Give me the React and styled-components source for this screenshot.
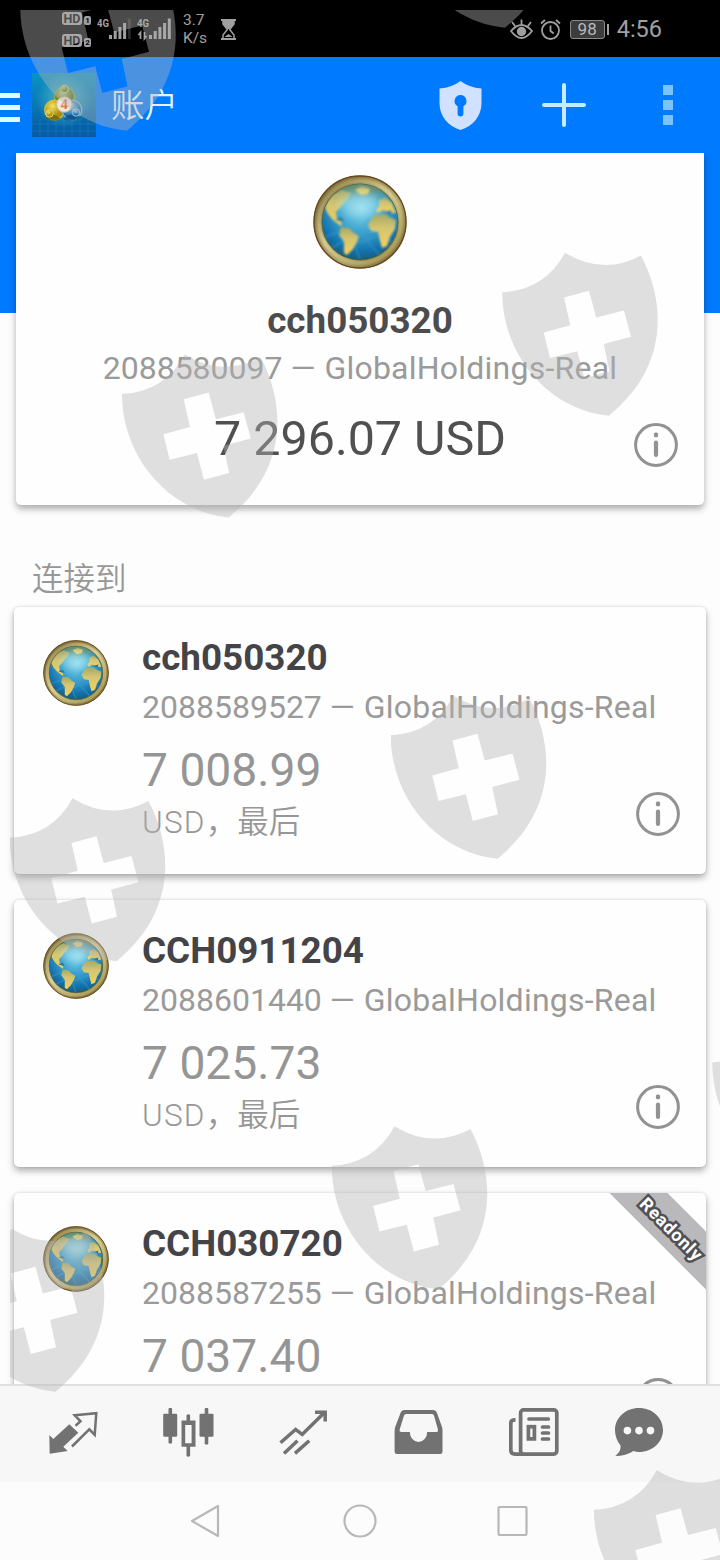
import React from "react";
import styled, { createGlobalStyle } from "styled-components";

const accounts = [
    { name: "cch050320", number: "2088589527", balance: "7 008.99" },
    { name: "CCH0911204", number: "2088601440", balance: "7 025.73" },
    {
        name: "CCH030720",
        number: "2088587255",
        balance: "7 037.40",
        readonly: true,
    },
];

// top left corner of every shield mark
const marks = [
    [20, -33],
    [398, -136],
    [502, 252],
    [121.7, 353.7],
    [390.5, 695],
    [9.5, 797.5],
    [712, 1022],
    [331.5, 1125.5],
    [-51.5, 1228],
    [593.7, 1469.5],
];

const GlobalStyle = createGlobalStyle`
    body {
        margin: 0;
        background: #fdfdfd;
        font-family: Roboto, "Noto Sans CJK SC", sans-serif;
    }
    p, h1, h2 {
        margin: 0;
        font-weight: 400;
    }
    svg {
        display: block;
        flex: none;
    }
`;

const Screen = styled.div`
    position: relative;
    display: flex;
    flex-direction: column;
    width: 720px;
    height: 1560px;
    overflow: hidden;
`;

const StatusBar = styled.div`
    display: flex;
    align-items: center;
    flex: none;
    box-sizing: border-box;
    height: 57px;
    padding: 1px 58px 0 62px;
    background: #000;
    color: #a0a0a0;
`;

const HdList = styled.div`
    display: flex;
    flex-direction: column;
    gap: 9px;
    margin-right: 6px;
`;

const HdRow = styled.div`
    display: flex;
    align-items: flex-end;
    gap: 2px;
    height: 13px;
    b {
        width: 20px;
        height: 13px;
        border-radius: 3px;
        background: #a0a0a0;
        color: #000;
        text-align: center;
        font-size: 12.5px;
        line-height: 13.5px;
    }
    i {
        width: 7px;
        height: 9px;
        border-radius: 2px;
        background: #a0a0a0;
        color: #000;
        text-align: center;
        font-style: normal;
        font-weight: 700;
        font-size: 8px;
        line-height: 9px;
    }
`;

const Speed = styled.p`
    width: 37px;
    margin: 0 0 0 12px;
    font-size: 15.5px;
    line-height: 18px;
    white-space: nowrap;
`;

const StatusRight = styled.div`
    display: flex;
    align-items: center;
    margin-left: auto;
`;

const Battery = styled.div`
    display: flex;
    align-items: center;
    gap: 2px;
    margin: 0 8px 0 9px;
    span {
        box-sizing: border-box;
        width: 35px;
        height: 19px;
        border: 1px solid #8a8a8a;
        border-radius: 3px;
        background: #3c3c3c;
        color: #b8b8b8;
        text-align: center;
        font-size: 17px;
        line-height: 17px;
    }
    &::after {
        content: "";
        width: 2px;
        height: 11px;
        background: #a0a0a0;
    }
`;

const Clock = styled.span`
    font-size: 23.5px;
    line-height: 28px;
`;

const AppBar = styled.header`
    display: flex;
    align-items: center;
    flex: none;
    box-sizing: border-box;
    height: 96px;
    padding-right: 47px;
    background: #007aff;
`;

const MenuButton = styled.div`
    width: 20px;
    height: 29px;
    margin: 4px 12px 0 0;
    box-sizing: border-box;
    border-top: 5px solid #e2f8ff;
    border-bottom: 5px solid #e2f8ff;
    &::before {
        content: "";
        display: block;
        height: 5px;
        margin-top: 7px;
        background: #e2f8ff;
    }
`;

const Title = styled.h1`
    flex: 1;
    padding: 2px 0 0 15px;
    color: #e4f3ff;
    font-size: 33.5px;
    font-weight: 350;
    line-height: 48px;
`;

const MoreButton = styled.div`
    display: grid;
    gap: 5px;
    margin-left: 77px;
    i {
        width: 10px;
        height: 10px;
        background: #7cc3fb;
    }
`;

const Content = styled.main`
    flex: 1;
    min-height: 0;
    overflow: hidden;
    background: linear-gradient(#007aff 160px, #fdfdfd 160px);
`;

const CurrentCard = styled.section`
    position: relative;
    display: flex;
    flex-direction: column;
    align-items: center;
    box-sizing: border-box;
    height: 352px;
    margin: 0 16px;
    padding-top: 22px;
    border-radius: 0 0 5px 5px;
    background: #fefefe;
    box-shadow: 0 4px 7px rgba(0, 0, 0, 0.32);
`;

const Name = styled.h2`
    margin-top: ${(props) => (props.$current ? 28 : 0)}px;
    color: ${(props) => (props.$current ? "#4c4c4c" : "#444448")};
    font-size: 36.8px;
    font-weight: 700;
    line-height: 48px;
`;

const Server = styled.p`
    color: #9a9a9a;
    font-size: 32px;
    line-height: 46px;
    white-space: nowrap;
    span {
        margin-left: 1px;
        letter-spacing: 0.23px;
    }
`;

const Balance = styled.p`
    color: ${(props) => (props.$current ? "#505050" : "#959595")};
    font-size: ${(props) => (props.$current ? 48.4 : 46.2)}px;
    line-height: 56px;
    margin-top: ${(props) => (props.$current ? 20 : 12)}px;
`;

const Currency = styled.p`
    margin-top: 1px;
    color: #979797;
    font-size: 31.5px;
    font-weight: 350;
    line-height: 48px;
    span {
        letter-spacing: 1.2px;
    }
`;

const InfoButton = styled.div`
    position: absolute;
    right: 26px;
    bottom: 38px;
`;

const ListTitle = styled.p`
    height: 48px;
    margin: 51px 32px 3px;
    color: #979797;
    font-size: 31.5px;
    font-weight: 350;
    line-height: 48px;
`;

const List = styled.div`
    display: flex;
    flex-direction: column;
    gap: 26px;
    margin: 0 14px;
`;

const Card = styled.section`
    position: relative;
    display: flex;
    gap: 33px;
    box-sizing: border-box;
    height: 267px;
    padding: 33px 29px 0;
    border-radius: 5px;
    background: #fefefe;
    box-shadow: 0 4px 7px rgba(0, 0, 0, 0.3), 0 0 3px rgba(0, 0, 0, 0.14);
`;

const CardBody = styled.div`
    margin-top: -6px;
    ${Server} {
        margin-top: 2px;
    }
`;

const RibbonArea = styled.div`
    position: absolute;
    top: 0;
    right: 0;
    width: 110px;
    height: 110px;
    overflow: hidden;
    border-radius: 0 5px 0 0;
`;

const Ribbon = styled.span`
    position: absolute;
    top: 13px;
    left: -14px;
    box-sizing: border-box;
    width: 180px;
    height: 41px;
    padding-left: 3px;
    background: #b9b9bb;
    color: #fff;
    text-align: center;
    font-size: 17.8px;
    font-weight: 700;
    line-height: 45px;
    letter-spacing: 0.8px;
    transform: rotate(45deg);
    -webkit-text-stroke: 5px #505055;
    paint-order: stroke fill;
`;

const TabBar = styled.nav`
    display: flex;
    gap: 65px;
    flex: none;
    box-sizing: border-box;
    height: 98px;
    padding: 21px 0 0 49px;
    border-top: 2px solid #e0e0e0;
    background: #f7f7f7;
    svg:last-child {
        margin-left: -10px;
    }
`;

const SystemNav = styled.div`
    display: flex;
    align-items: center;
    justify-content: center;
    gap: 120px;
    flex: none;
    height: 78px;
    background: #fcfcfc;
`;

const MarkLayer = styled.svg`
    position: absolute;
    top: 0;
    left: 0;
    pointer-events: none;
`;

const AlarmIcon = styled.svg`
    margin-left: 7px;
`;

const PlusIcon = styled.svg`
    margin-left: 60px;
`;

const Globe = ({ size, id }) => (
    <svg width={size} height={size} viewBox="0 0 94 94">
        <defs>
            <linearGradient id={`rim${id}`} x1="0" y1="0" x2="1" y2="1">
                <stop offset="0" stopColor="#665526" />
                <stop offset="0.3" stopColor="#94844a" />
                <stop offset="0.6" stopColor="#aea265" />
                <stop offset="1" stopColor="#6c5722" />
            </linearGradient>
            <linearGradient id={`ring${id}`} x1="0" y1="0" x2="0.8" y2="1">
                <stop offset="0" stopColor="#8a7a44" />
                <stop offset="0.5" stopColor="#d8cf98" />
                <stop offset="1" stopColor="#a89a55" />
            </linearGradient>
            <radialGradient id={`sea${id}`} cx="0.52" cy="0.32" r="0.7">
                <stop offset="0" stopColor="#86d6ee" />
                <stop offset="0.4" stopColor="#43a9d2" />
                <stop offset="0.8" stopColor="#1272ae" />
                <stop offset="1" stopColor="#1b5a70" />
            </radialGradient>
            <linearGradient id={`land${id}`} x1="0" y1="0" x2="0" y2="1">
                <stop offset="0" stopColor="#a5a765" />
                <stop offset="0.4" stopColor="#d3c572" />
                <stop offset="1" stopColor="#f6d05a" />
            </linearGradient>
            <filter id={`soft${id}`}>
                <feGaussianBlur stdDeviation="1" />
            </filter>
            <filter id={`glow${id}`} x="-50%" y="-50%" width="200%" height="200%">
                <feGaussianBlur stdDeviation="5" />
            </filter>
            <clipPath id={`ball${id}`}>
                <circle cx="47" cy="47" r="37.8" />
            </clipPath>
        </defs>
        <circle cx="47" cy="47" r="46.5" fill={`url(#rim${id})`} />
        <circle
            cx="47"
            cy="47"
            r="41"
            fill="none"
            stroke={`url(#ring${id})`}
            strokeWidth="4.5"
            filter={`url(#soft${id})`}
        />
        <circle cx="47" cy="47" r="38.5" fill="#5d6437" />
        <g clipPath={`url(#ball${id})`}>
            <circle cx="47" cy="47" r="38" fill={`url(#sea${id})`} />
            <path
                d="M12 62L30 55L45 68L66 60L84 70M18 73L47 58L70 84M56 44L40 66L47 84"
                fill="none"
                stroke="#3fa3d5"
                strokeWidth="2"
                opacity="0.4"
                filter={`url(#soft${id})`}
            />
            <ellipse cx="47" cy="12" rx="32" ry="8" fill="#77803f" opacity="0.7" filter={`url(#glow${id})`} />
            <g filter={`url(#soft${id})`}>
                <g fill={`url(#land${id})`}>
                    <path d="M12 33Q14 24 20 19L29 15L38 18L35 24L30 29L27 33L23 37L24 44L29 48L28 51L20 45L15 39Z" />
                    <path d="M28 52L36 53L41 58L46 61L44 67L40 74L34 80L31 78L31 67L26 60Z" />
                    <path d="M55 50L58 44L62 40L72 39L78 43L83 45L82 54L77 62L74 71L69 73L67 66L65 57L58 56Z" />
                    <path d="M63 35L66 31L66 25L72 22L79 28L83 38L76 38L70 35L65 38Z" />
                    <path d="M42 15L49 11L57 14L55 19L48 20Z" />
                </g>
                <path d="M70 37L79 35L78 39ZM22 45L31 47L28 42Z" fill="#287a9c" />
            </g>
            <ellipse cx="46" cy="29" rx="20" ry="12" fill="#bdeef2" opacity="0.45" filter={`url(#glow${id})`} />
        </g>
        <circle cx="47" cy="47" r="46" fill="none" stroke="#684a22" strokeWidth="1.4" />
    </svg>
);

const InfoIcon = () => (
    <InfoButton>
        <svg width="44" height="44" viewBox="0 0 44 44">
            <circle cx="22" cy="22" r="20.4" fill="none" stroke="#929292" strokeWidth="3" />
            <path d="M22 19.5V32" stroke="#929292" strokeWidth="4.2" strokeLinecap="round" />
            <rect x="19.9" y="9.5" width="4.2" height="4.8" rx="1.5" fill="#929292" />
        </svg>
    </InfoButton>
);

const AppIcon = () => (
    <svg width="64" height="64" viewBox="0 0 64 64">
        <defs>
            <linearGradient id="appBg" x1="0" y1="0" x2="0" y2="1">
                <stop offset="0" stopColor="#0a93c4" />
                <stop offset="0.5" stopColor="#0a78b6" />
                <stop offset="0.8" stopColor="#0563a8" />
                <stop offset="1" stopColor="#065aa4" />
            </linearGradient>
            <radialGradient id="appGlow">
                <stop offset="0" stopColor="#5fc6cc" />
                <stop offset="1" stopColor="#5fc6cc" stopOpacity="0" />
            </radialGradient>
            <radialGradient id="appGreen" cx="0.4" cy="0.3">
                <stop offset="0" stopColor="#b9ca78" />
                <stop offset="1" stopColor="#587a2c" />
            </radialGradient>
            <radialGradient id="appGold" cx="0.4" cy="0.3">
                <stop offset="0" stopColor="#f6e25a" />
                <stop offset="1" stopColor="#a98d10" />
            </radialGradient>
            <radialGradient id="appBlue" cx="0.4" cy="0.3">
                <stop offset="0" stopColor="#9ad3ee" />
                <stop offset="1" stopColor="#176fae" />
            </radialGradient>
        </defs>
        <rect width="64" height="64" fill="url(#appBg)" />
        <circle cx="32" cy="27" r="28" fill="url(#appGlow)" opacity="0.8" />
        <path
            d="M0 51H64M0 58H64M8 46V64M16 46V64M24 46V64M32 46V64M40 46V64M48 46V64M56 46V64"
            stroke="#2b94cf"
            strokeWidth="0.6"
            opacity="0.5"
        />
        <g strokeWidth="1.3">
            <circle cx="32.5" cy="24" r="10" fill="url(#appGreen)" stroke="#8ea457" />
            <circle cx="32.5" cy="16" r="3.6" fill="url(#appGreen)" stroke="#b9c97f" />
            <circle cx="22.5" cy="37" r="9.8" fill="url(#appGold)" stroke="#d6bf3d" />
            <circle cx="40" cy="37" r="9.8" fill="url(#appBlue)" stroke="#76b5d8" />
        </g>
        <path d="M13 45Q20 38 29 46Q21 50 13 45Z" fill="#6f6410" opacity="0.8" />
        <path d="M31 46Q39 38 49 44Q41 50 31 46Z" fill="#124f85" opacity="0.8" />
        <circle cx="17.5" cy="40.5" r="3.7" fill="url(#appGold)" stroke="#f3e486" strokeWidth="0.8" />
        <circle cx="44" cy="39.5" r="3.7" fill="url(#appBlue)" stroke="#b8ddef" strokeWidth="0.8" />
        <circle cx="32.3" cy="31.5" r="7.8" fill="#efe5d8" stroke="#c9b98b" />
        <text
            x="32.3"
            y="36.3"
            fill="#dc7348"
            fontFamily="Liberation Serif, serif"
            fontSize="14"
            fontWeight="700"
            textAnchor="middle"
        >
            4
        </text>
    </svg>
);

const Signal = ({ faded, arrows }) => (
    <svg width="34" height="24" viewBox="0 0 34 24">
        <text x="0" y="10" fill="#a0a0a0" fontFamily="Roboto, sans-serif" fontSize="11.5" fontWeight="700" textLength="12" lengthAdjust="spacingAndGlyphs">
            4G
        </text>
        <g fill="#a0a0a0">
            <rect x="12" y="18" width="3" height="4" />
            <rect x="16.7" y="14" width="3" height="8" />
            <rect x="21.4" y="10" width="3" height="12" />
            <rect x="26.1" y="6" width="3" height="16" />
            <rect x="30.8" y="1.5" width="3" height="20.5" opacity={faded ? 0.25 : 1} />
        </g>
        {arrows && (
            <path
                d="M3.5 22V15.5L1.5 18M7.5 15V21.5L9.5 19"
                fill="none"
                stroke="#a0a0a0"
                strokeWidth="1.8"
            />
        )}
    </svg>
);

const Tabs = () => (
    <TabBar>
        <svg width="50" height="50" viewBox="0 0 50 50">
            <path d="M.3 28L4.3 32L20.3 17.3L29.3 25.7L14.3 39.7L18.7 44L.7 46.7Z" fill="#727272" />
            <path
                d="M26.5 18.8L31.5 14.3L25.7 8.3L47.3 6.2L45.7 27.8L40.3 22.3L23 39.5"
                fill="none"
                stroke="#727272"
                strokeWidth="2.5"
            />
        </svg>
        <svg width="50" height="50" viewBox="0.5 0 50 50" fill="#727272" overflow="visible">
            <rect x="-.3" y="6.8" width="14" height="23" rx="1.3" />
            <rect x="5" y="1" width="3.6" height="35.5" rx="1" />
            <rect x="36" y="6.8" width="14" height="23" rx="1.3" />
            <rect x="41.2" y="1" width="3.6" height="36.5" rx="1" />
            <path d="M18 13.6H23V8Q24.8 6.4 26.6 8V13.6H32V39.8H26.6V49Q24.8 50.5 23 49V39.8H18ZM21.7 18V36.3H28.1V18Z" fillRule="evenodd" />
        </svg>
        <svg width="50" height="50" viewBox="0 0 50 50" fill="none" stroke="#727272" strokeWidth="3.5">
            <path d="M1.5 35.8L16.6 22.4L23.2 27.4L46 5M36 5.2H46.2V14.5M5 46.4L18.5 33.7M16 46.4L30.2 33.7" />
        </svg>
        <svg width="50" height="50" viewBox="0 0 50 50">
            <path
                d="M10.5 3H39Q42 3 43 6L48 20Q48.5 21.5 48.5 24V44.5Q48.5 47 46 47H3Q.6 47 .6 44.5V24Q.6 21.5 1.2 20L6.5 6Q7.5 3 10.5 3ZM12 7Q10.6 7 10 8.5L5.8 22Q5 25 7.5 25H15.8A8.7 10 0 0 0 33.2 25H42.5Q44.5 25 43.8 22L40 8.5Q39.4 7 38 7Z"
                fill="#727272"
                fillRule="evenodd"
            />
        </svg>
        <svg width="50" height="50" viewBox="0 0 50 50" fill="none" stroke="#727272" strokeWidth="3.7">
            <rect x="11.6" y="2.9" width="36.2" height="44.2" rx="3" />
            <path d="M6.5 12.8Q1.8 12.8 1.8 16V43Q1.8 47.1 6 47.1H14" />
            <path d="M20 12H39.3M33.5 20H39.5M33.5 26H39.5M33.5 32H39.5" strokeLinecap="round" />
            <rect x="19.4" y="19.7" width="6" height="12.2" />
        </svg>
        <svg width="50" height="50" viewBox="0 0 50 50">
            <path d="M25 1C38.5 1 49 10.7 49 23S38.5 45 25 45Q22 45 19.5 44Q12 49 1.3 49Q7.5 44 6.5 38.5Q1 31.5 1 23C1 10.7 11.5 1 25 1Z" fill="#727272" />
            <g fill="#f7f7f7">
                <circle cx="13.4" cy="23.6" r="3.8" />
                <circle cx="25" cy="23.6" r="3.8" />
                <circle cx="36.5" cy="23.6" r="3.8" />
            </g>
        </svg>
    </TabBar>
);

const Marks = () => (
    <MarkLayer width="720" height="1560" viewBox="0 0 720 1560">
        <defs>
            <path
                id="mark"
                fillRule="evenodd"
                d="M63 .7Q101 24 139 3.5C164.5 52 166 116 107 163.7C46 158 0 102 .3 40.3Q43 38 63 .7ZM62 45.5L87 38.7L94.2 65.6L122 58.5L129 84.7L101.7 92L107.5 119.2L82.3 126L75.3 99.3L48 106L41.7 80.5L68.3 73.2Z"
            />
            <clipPath id="safe">
                <rect x="10" y="10" width="710" height="1550" />
            </clipPath>
        </defs>
        <g clipPath="url(#safe)" fill="#b4b4b4" fillOpacity="0.415">
            {marks.map(([x, y]) => (
                <use key={`${x}_${y}`} href="#mark" x={x} y={y} />
            ))}
        </g>
    </MarkLayer>
);

const App = () => {
    return (
        <Screen>
            <GlobalStyle />
            <StatusBar>
                <HdList>
                    <HdRow>
                        <b>HD</b>
                        <i>1</i>
                    </HdRow>
                    <HdRow>
                        <b>HD</b>
                        <i>2</i>
                    </HdRow>
                </HdList>
                <Signal faded />
                <svg width="6" height="1" />
                <Signal arrows />
                <Speed>
                    3.7
                    <br />
                    K/s
                </Speed>
                <svg width="17" height="21" viewBox="0 0 17 21">
                    <path d="M1 1H16M1 20H16" stroke="#a0a0a0" strokeWidth="2" />
                    <path d="M3 1V5L7.3 10.5L3 16V20M14 1V5L9.7 10.5L14 16V20" fill="none" stroke="#a0a0a0" strokeWidth="1.5" />
                    <path d="M3 2H14V5L9.5 10H7.5L3 5ZM4.5 18L8.5 15L12.5 18Z" fill="#a0a0a0" />
                </svg>
                <StatusRight>
                    <svg width="23" height="21" viewBox="0 0 23 21" fill="none" stroke="#a0a0a0" strokeWidth="1.8">
                        <path d="M1 12Q11.5 0 22 12Q11.5 26 1 12ZM11.5 5V.5M5 7L2 3M18 7L21 3" />
                        <circle cx="11.5" cy="12.5" r="3.8" fill="#a0a0a0" />
                    </svg>
                    <AlarmIcon width="21" height="21" viewBox="0 0 21 21" fill="none" stroke="#a0a0a0" strokeWidth="1.8">
                        <circle cx="10.5" cy="11.5" r="8.5" />
                        <path d="M10.5 6.5V12L13.7 14.5M1 4.5L5 1M20 4.5L16 1" />
                    </AlarmIcon>
                    <Battery>
                        <span>98</span>
                    </Battery>
                    <Clock>4:56</Clock>
                </StatusRight>
            </StatusBar>
            <AppBar>
                <MenuButton />
                <AppIcon />
                <Title>账户</Title>
                <svg width="43" height="49" viewBox="0 0 43 49">
                    <path
                        d="M21.5 0Q30 6.5 42.5 7.5V22C42.5 35 34 45 21.5 49C9 45 .5 35 .5 22V7.5Q13 6.5 21.5 0ZM21.5 14A6 6 0 0 0 18.6 25.2V32.5A2.9 2.9 0 0 0 24.4 32.5V25.2A6 6 0 0 0 21.5 14Z"
                        fill="#d0e2ff"
                        fillRule="evenodd"
                    />
                </svg>
                <PlusIcon width="44" height="44" viewBox="0 0 44 44">
                    <path d="M22 2V42M2 22H42" stroke="#c5ecff" strokeWidth="4" strokeLinecap="round" />
                </PlusIcon>
                <MoreButton>
                    <i />
                    <i />
                    <i />
                </MoreButton>
            </AppBar>
            <Content>
                <CurrentCard>
                    <Globe size={94} id="current" />
                    <Name $current>cch050320</Name>
                    <Server>
                        2088580097 — <span>GlobalHoldings-Real</span>
                    </Server>
                    <Balance $current>7 296.07 USD</Balance>
                    <InfoIcon />
                </CurrentCard>
                <ListTitle>连接到</ListTitle>
                <List>
                    {accounts.map((v) => (
                        <Card key={v.number}>
                            <Globe size={66} id={v.number} />
                            <CardBody>
                                <Name>{v.name}</Name>
                                <Server>
                                    {v.number} — <span>GlobalHoldings-Real</span>
                                </Server>
                                <Balance>{v.balance}</Balance>
                                <Currency>
                                    <span>USD</span>，最后
                                </Currency>
                            </CardBody>
                            <InfoIcon />
                            {v.readonly && (
                                <RibbonArea>
                                    <Ribbon>Readonly</Ribbon>
                                </RibbonArea>
                            )}
                        </Card>
                    ))}
                </List>
            </Content>
            <Tabs />
            <SystemNav>
                <svg width="36" height="34" viewBox="0 0 36 34">
                    <path d="M5 17L31 2V32Z" fill="none" stroke="#b8b8b8" strokeWidth="2.2" strokeLinejoin="round" />
                </svg>
                <svg width="34" height="34" viewBox="0 0 34 34">
                    <circle cx="17" cy="17" r="15.5" fill="none" stroke="#b8b8b8" strokeWidth="2.2" />
                </svg>
                <svg width="36" height="32" viewBox="0 0 36 32">
                    <rect x="1.5" y="2" width="28" height="28" rx="1" fill="none" stroke="#b8b8b8" strokeWidth="2.2" />
                </svg>
            </SystemNav>
            <Marks />
        </Screen>
    );
};

export default App;
